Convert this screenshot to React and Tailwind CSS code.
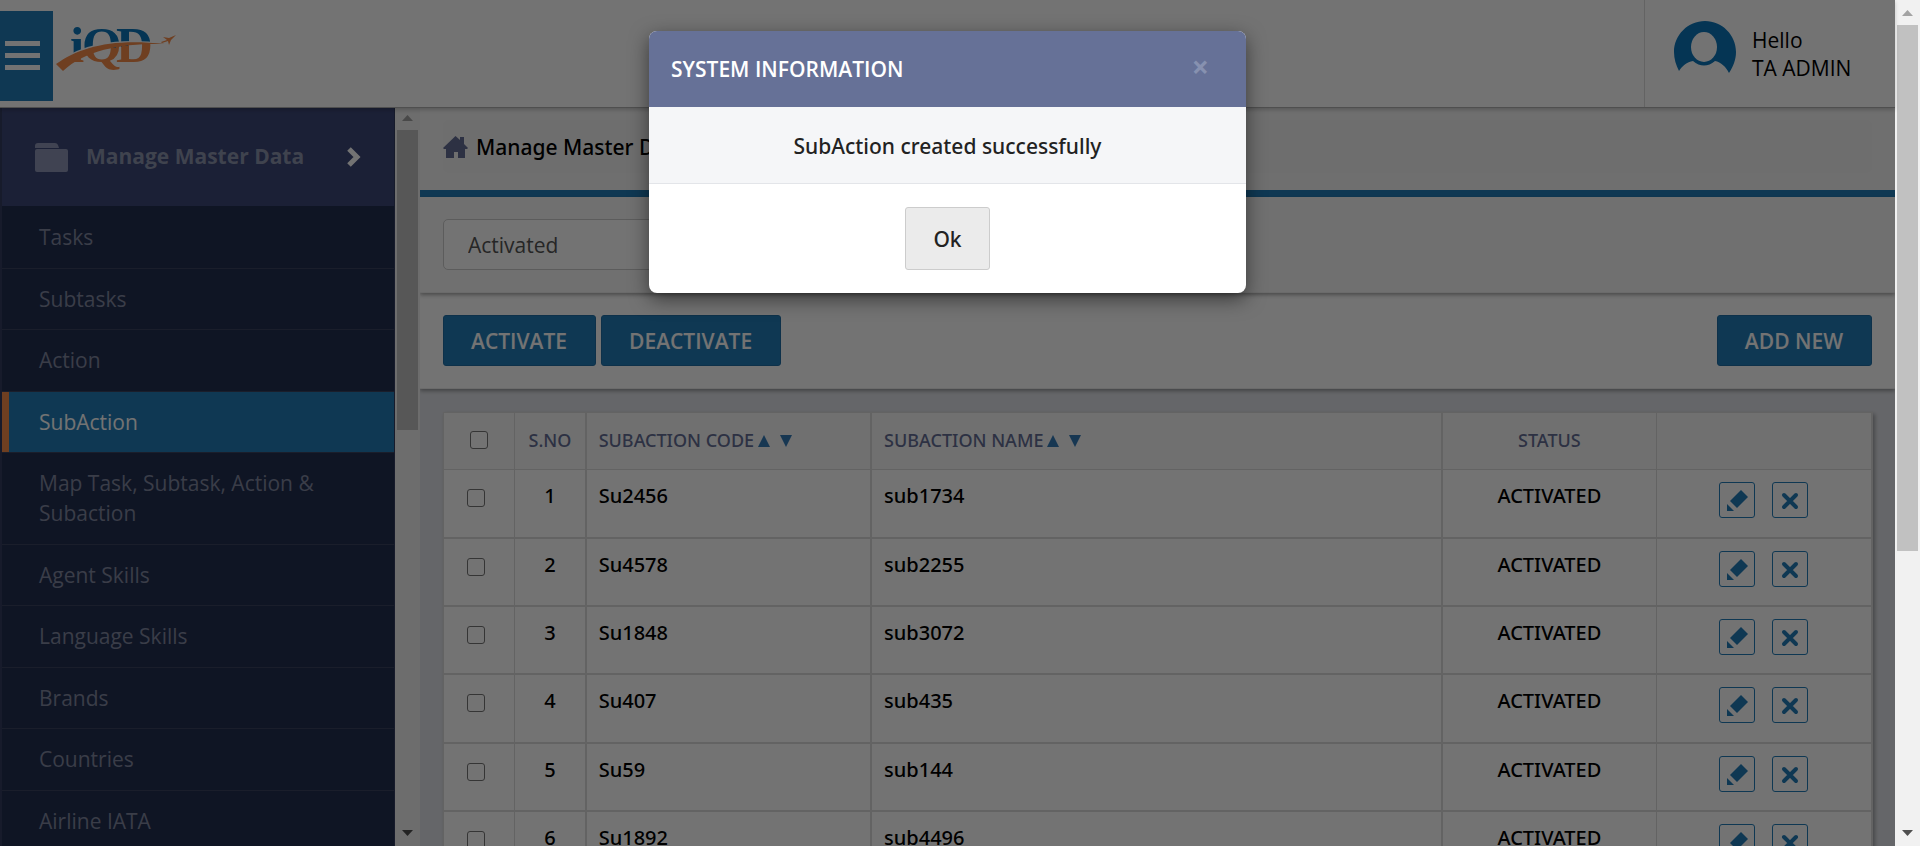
import { useState } from "react";

const menu = [
  "Tasks",
  "Subtasks",
  "Action",
  "SubAction",
  "Map Task, Subtask, Action & Subaction",
  "Agent Skills",
  "Language Skills",
  "Brands",
  "Countries",
  "Airline IATA",
];

const rows = [
  ["Su2456", "sub1734"],
  ["Su4578", "sub2255"],
  ["Su1848", "sub3072"],
  ["Su407", "sub435"],
  ["Su59", "sub144"],
  ["Su1892", "sub4496"],
];

function Scrollbar({ thumb, className = "" }) {
  return (
    <div aria-hidden="true" className={`flex w-[25px] shrink-0 flex-col items-center bg-[#f1f1f1] ${className}`}>
      <svg className="h-[25px] w-[25px] shrink-0" viewBox="0 0 25 25">
        <path d="M12.5 10 L18 16 H7 Z" fill="#a3a3a3" />
      </svg>
      <div className={`w-[21px] shrink-0 bg-[#c1c1c1] ${thumb}`} />
      <div className="flex-1" />
      <svg className="h-[25px] w-[25px] shrink-0" viewBox="0 0 25 25">
        <path d="M7 9 H18 L12.5 15 Z" fill="#4f4f4f" />
      </svg>
    </div>
  );
}

function Logo() {
  return (
    <svg className="h-[80px] w-[124px] overflow-visible" viewBox="54 10 124 80" role="img" aria-label="iQD">
      <defs>
        <linearGradient id="split" gradientUnits="userSpaceOnUse" x1="106" y1="38" x2="110" y2="62">
          <stop offset="0.45" stopColor="#0c76bb" />
          <stop offset="0.45" stopColor="#f58c4b" />
        </linearGradient>
      </defs>
      <text x="70 82 116" y="62" fontFamily="Liberation Serif, serif" fontWeight="700" fontSize="51" fill="url(#split)">iQD</text>
      <path d="M56 64 C80 46 112 38 165 44" fill="none" stroke="#fff" strokeWidth="2" />
      <path d="M56 64 C80 47 112 38 165 44 C125 43 86 49 63 71 Z" fill="#f58c4b" />
      <path d="M161 42 L167 40 L163 37 L169 38 L176 35 L171 40 L169 45 L168 41 L162 43 Z" fill="#f58c4b" />
    </svg>
  );
}

function Avatar() {
  return (
    <svg className="h-[52px] w-[62px]" viewBox="0 0 62 52" aria-hidden="true">
      <path d="M31 0 C48 0 62 14 62 31 C62 39 59 46 55 52 C52 46 47 41 41 40 C34 46 26 46 19 40 C13 41 8 45 5 50 C2 44 0 38 0 31 C0 14 14 0 31 0 Z" fill="#0c76bb" />
      <ellipse cx="30" cy="26" rx="13" ry="15" fill="#fff" />
    </svg>
  );
}

function Sort() {
  return (
    <span className="ml-1 inline-flex gap-[10px]">
      <button type="button" aria-label="Sort ascending">
        <svg className="h-3 w-3" viewBox="0 0 12 12"><path d="M6 0 L12 12 H0 Z" fill="#337ab7" /></svg>
      </button>
      <button type="button" aria-label="Sort descending">
        <svg className="h-3 w-3" viewBox="0 0 12 12"><path d="M0 0 H12 L6 12 Z" fill="#337ab7" /></svg>
      </button>
    </span>
  );
}

const check = "block h-[18px] w-[18px] appearance-none rounded-[3px] border border-[#767676] bg-white";
const action = "h-[51px] rounded-[3px] border border-[#1f6ea5] bg-[#237db9] pt-0.5 pr-7 pl-[27px] text-[21px] font-semibold text-white";
const iconButton = "flex h-9 w-9 items-center justify-center rounded-[3px] border border-[#237db9]";

export default function App() {
  const [open, setOpen] = useState(true);
  return (
    <div className="flex h-screen overflow-hidden font-['Open_Sans',sans-serif] text-black">
      <div className="relative flex min-w-0 flex-1 flex-col bg-[#e1e3e9]">
        <header className="z-10 flex h-[108px] shrink-0 items-stretch border-b border-[#b0b0b0] bg-white shadow-[0_2px_4px_rgba(0,0,0,0.2)]">
          <button type="button" aria-label="Toggle menu" className="mt-[11px] flex h-[90px] w-[53px] flex-col justify-center gap-[7px] bg-[#237db9] pb-0.5 pl-[5px]">
            <span className="h-[5px] w-[35px] bg-white" />
            <span className="h-[5px] w-[35px] bg-white" />
            <span className="h-[5px] w-[35px] bg-white" />
          </button>
          <div className="mt-[10px] ml-px"><Logo /></div>
          <div className="ml-auto flex w-[251px] border-l border-[#dcdcdc] pt-[21px] pl-[29px]">
            <Avatar />
            <div className="pt-[5px] pl-4 text-[21px] leading-7">
              <p>Hello</p>
              <p>TA ADMIN</p>
            </div>
          </div>
        </header>

        <div className="flex min-h-0 flex-1">
          <aside className="flex w-[420px] shrink-0">
            <nav className="min-w-0 flex-1 overflow-hidden border-r border-l-2 border-r-[#343d60] border-l-[#343d60] bg-[#232f50]">
              <div className="flex h-[98px] items-center bg-[#3d4878] pl-[33px]">
                <svg className="h-[29px] w-[33px]" viewBox="0 0 33 29" fill="#8f95b5" aria-hidden="true">
                  <path d="M0 5 V3 Q0 0 3 0 H20 Q22 0 23 2 L24 5 Z" />
                  <rect y="6" width="33" height="23" rx="2" />
                </svg>
                <span className="ml-[18px] text-[21px] font-bold text-[#8d94ad]">Manage Master Data</span>
                <svg className="ml-auto mr-8 h-5 w-4" viewBox="0 0 16 20" aria-hidden="true">
                  <path d="M3 2 L11 10 L3 18" fill="none" stroke="#fff" strokeWidth="5" />
                </svg>
              </div>
              <ul className="flex h-[646px] flex-col pt-px">
                {menu.map((m) => (
                  <li key={m} className={`flex grow border-b border-[#3b435f] ${m === "SubAction" ? "bg-[#237db9]" : ""}`}>
                    <a
                      href="#"
                      className={`flex w-full items-center py-[15px] pr-14 text-[21px] leading-[30px] ${
                        m === "SubAction" ? "border-l-[7px] border-[#f48c4a] pl-[30px] text-white" : "pl-[37px] text-[#8087a0]"
                      }`}
                    >
                      {m}
                    </a>
                  </li>
                ))}
              </ul>
            </nav>
            <Scrollbar thumb="h-[300px]" className="-mt-[3px]" />
          </aside>

          <main className="min-w-0 flex-1 overflow-hidden">
            <div className="border-b-[7px] border-[#237db9] bg-[#f6f6f6] px-[23px] pt-3 pb-[17px]">
              <div className="flex h-[53px] items-center rounded-[5px] bg-[#f3f3f3]">
                <svg className="h-[22px] w-[25px]" viewBox="0 0 25 22" fill="#646e96" aria-hidden="true">
                  <path d="M12.500 0 L17 4 V1 H21 V8 L25 12 L24 13 H22 V22 H15 V16 H11 V22 H3 V13 H1 L0 12 Z" />
                </svg>
                <span className="ml-2 pt-0.5 font-['Noto_Sans',sans-serif] text-[21px] font-medium">Manage Master Data</span>
              </div>
            </div>
            <div className="relative border-b border-[#eee] bg-[#f8f8f8] px-[23px] py-[22px] shadow-[0_2px_4px_rgba(0,0,0,0.35)]">
              <select aria-label="Status filter" className="block h-[51px] w-[460px] appearance-none rounded-[5px] border border-[#ccc] bg-white px-6 pt-0.5 text-[21px] text-[#555]">
                <option>Activated</option>
                <option>Deactivated</option>
              </select>
            </div>
            <div className="flex gap-[5px] border-b border-[#eee] bg-white px-[23px] py-[22px] shadow-[0_2px_4px_rgba(0,0,0,0.35)]">
              <button type="button" className={action}>ACTIVATE</button>
              <button type="button" className={action}>DEACTIVATE</button>
              <button type="button" className={`${action} ml-auto`}>ADD NEW</button>
            </div>
            <div className="pt-[23px] pr-[22px] pl-[23px]">
              <table className="w-full table-fixed border-separate border-spacing-0 border-t border-r-2 border-l border-[#dcdcdc] bg-white font-['Noto_Sans',sans-serif] text-[20px] font-medium shadow-[2px_2px_4px_rgba(0,0,0,0.3)]">
                <colgroup>
                  <col className="w-[5%]" />
                  <col className="w-[5%]" />
                  <col className="w-[20%]" />
                  <col className="w-[40%]" />
                  <col className="w-[15%]" />
                  <col />
                </colgroup>
                <thead>
                  <tr className="h-[57px] bg-[#f8f8f8] text-[18px] text-[#646e96] *:border-b *:border-[#dcdcdc] *:pb-0.5 *:font-medium">
                    <th className="border-r pl-[26px]"><input type="checkbox" aria-label="Select all" className={check} /></th>
                    <th className="border-r-2">S.NO</th>
                    <th className="border-r-2 pl-3 text-left">SUBACTION CODE<Sort /></th>
                    <th className="border-r-2 pl-3 text-left">SUBACTION NAME<Sort /></th>
                    <th className="border-r">STATUS</th>
                    <th aria-label="Actions" />
                  </tr>
                </thead>
                <tbody>
                  {rows.map(([code, name], i) => (
                    <tr key={code} className="h-[68px] *:border-b-2 *:border-[#dcdcdc] *:pt-3 *:align-top nth-[3n+1]:h-[69px]">
                      <td className="border-r pl-[23px]">
                        <div className="pt-[7px]"><input type="checkbox" aria-label={`Select ${code}`} className={check} /></div>
                      </td>
                      <td className="border-r-2 text-center leading-7">{i + 1}</td>
                      <td className="border-r-2 pl-3 leading-7">{code}</td>
                      <td className="border-r-2 pl-3 leading-7">{name}</td>
                      <td className="border-r text-center leading-7">ACTIVATED</td>
                      <td>
                        <div className="flex justify-center gap-[17px]">
                          <button type="button" aria-label={`Edit ${code}`} className={iconButton}>
                            <svg className="h-[21px] w-[21px]" viewBox="0 0 21 21" fill="#237db9" aria-hidden="true">
                              <path d="M14 0 L21 7 L10 18 L3 11 Z" />
                              <path d="M0 14 L7 21 H0 Z" />
                            </svg>
                          </button>
                          <button type="button" aria-label={`Remove ${code}`} className={iconButton}>
                            <svg className="mt-0.5 h-[18px] w-[18px]" viewBox="0 0 18 18" aria-hidden="true">
                              <path d="M3 3 L15 15 M15 3 L3 15" stroke="#237db9" strokeWidth="4" strokeLinecap="round" />
                            </svg>
                          </button>
                        </div>
                      </td>
                    </tr>
                  ))}
                </tbody>
              </table>
            </div>
          </main>
        </div>

        {open && (
          <div className="absolute inset-0 z-20 flex items-start justify-center bg-black/55 pt-[31px]">
            <div role="dialog" aria-labelledby="dialog-title" className="w-[597px] overflow-hidden rounded-lg bg-white text-[21px] text-[#222] shadow-[0_6px_19px_rgba(0,0,0,0.5)]">
              <div className="flex h-[76px] items-center justify-between bg-[#667197] pr-[37px] pl-[22px]">
                <h2 id="dialog-title" className="pt-0.5 font-semibold text-white">SYSTEM INFORMATION</h2>
                <button type="button" aria-label="Close" onClick={() => setOpen(false)} className="-mt-1 text-[30px] leading-none font-bold text-[#8791b0]">×</button>
              </div>
              <p className="flex h-[77px] items-center justify-center border-b border-[#e3e5e9] bg-[#f5f6f8] pt-1 font-['Noto_Sans',sans-serif] font-medium">SubAction created successfully</p>
              <div className="flex justify-center py-[23px]">
                <button type="button" onClick={() => setOpen(false)} className="h-[63px] w-[85px] rounded-[3px] border border-[#ccc] bg-[#ebebeb] pt-0.5 font-['Noto_Sans',sans-serif] font-medium">Ok</button>
              </div>
            </div>
          </div>
        )}
      </div>
      <Scrollbar thumb="h-[526px]" />
    </div>
  );
}
